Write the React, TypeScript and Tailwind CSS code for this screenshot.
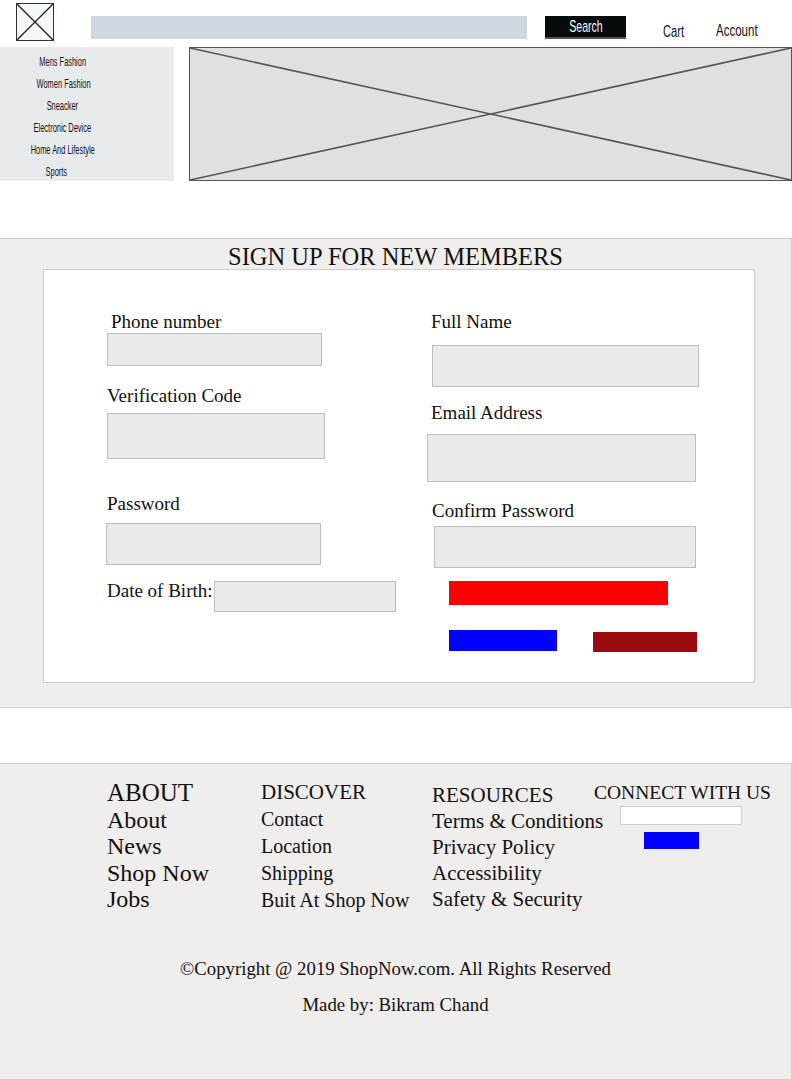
const serif = "font-['Liberation_Serif',serif] text-[#111]";
const sans = "font-['Liberation_Sans',Arial,sans-serif]";

const categories = [
  { label: "Mens Fashion", cls: "pl-[2px]" },
  { label: "Women Fashion", cls: "pl-[4px]" },
  { label: "Sneacker", cls: "" },
  { label: "Electronic Device", cls: "" },
  { label: "Home And Lifestyle", cls: "pl-[2px]" },
  { label: "Sports", cls: "pr-[12px]" },
];

const footerCols = [
  { title: "ABOUT", items: ["About", "News", "Shop Now", "Jobs"], w: "w-[154px]", size: "text-[24px] leading-[26.5px]" },
  { title: "DISCOVER", items: ["Contact", "Location", "Shipping", "Buit At Shop Now"], w: "w-[171px]", size: "text-[20px] leading-[27px]" },
  { title: "RESOURCES", items: ["Terms & Conditions", "Privacy Policy", "Accessibility", "Safety & Security"], w: "w-[162px]", size: "text-[21px] leading-[26px]" },
];

// crossed-out placeholder box
const Cross = ({ stroke = "#444", width = 1.5 }: { stroke?: string; width?: number }) => (
  <svg className="absolute inset-0 h-full w-full" viewBox="0 0 100 100" preserveAspectRatio="none">
    <line x1="0" y1="0" x2="100" y2="100" stroke={stroke} strokeWidth={width} vectorEffect="non-scaling-stroke" />
    <line x1="100" y1="0" x2="0" y2="100" stroke={stroke} strokeWidth={width} vectorEffect="non-scaling-stroke" />
  </svg>
);

const Field = ({ className }: { className: string }) => (
  <div className={`border border-[#bdbdbd] bg-[#eaeaea] ${className}`} />
);

const Label = ({ children, className = "" }: { children: React.ReactNode; className?: string }) => (
  <div className={`text-[19px] leading-5 ${className}`}>{children}</div>
);

export default function App() {
  return (
    <div className="min-h-[1080px] w-[792px] bg-white">
      {/* Top bar */}
      <div className={`flex h-[47px] items-start ${sans}`}>
        <div className="relative ml-4 mt-[3px] h-[38px] w-[38px] border border-[#333] bg-[#f4f8f9]">
          <Cross stroke="#222" width={1.3} />
        </div>
        <div className="ml-[37px] mt-4 h-[23px] w-[436px] bg-[#cdd9de]" />
        <button className="ml-[18px] mt-4 flex h-[23px] w-[81px] items-center justify-center border-b-2 border-[#555] bg-[#050a0c]">
          <span className="inline-block scale-x-[0.62] text-[17px] leading-5 text-white">Search</span>
        </button>
        <div className="ml-[37px] mt-[20px] w-[26px] overflow-visible">
          <span className="inline-block origin-left scale-x-[0.7] text-[16px] leading-5 text-[#111]">Cart</span>
        </div>
        <div className="ml-[27px] mt-[19px] w-[42px]">
          <span className="inline-block origin-left scale-x-[0.72] text-[16px] leading-5 text-[#111]">Account</span>
        </div>
      </div>

      {/* Categories + banner */}
      <div className="flex h-[134px]">
        <div className={`w-[174px] bg-[#e8ebee] pt-1 ${sans}`}>
          <ul className="w-[124px] text-center">
            {categories.map((c) => (
              <li key={c.label} className={`h-[22px] text-[12px] leading-[22px] text-[#111] ${c.cls}`}>
                <span className="inline-block scale-x-[0.62]">{c.label}</span>
              </li>
            ))}
          </ul>
        </div>
        <div className="relative ml-[15px] flex-1 border border-[#555] bg-[#e0e0e0]">
          <Cross stroke="#555" width={1.6} />
        </div>
      </div>

      {/* Sign up */}
      <section className={`mt-[57px] h-[470px] w-[792px] border border-l-0 border-[#cfcfcf] bg-[#f0eded] pt-[6px] ${serif}`}>
        <h2 className="h-6 text-center text-[24.5px] leading-6">SIGN UP FOR NEW MEMBERS</h2>
        <div className="ml-[43px] h-[414px] w-[712px] border border-[#cfcfcf] bg-white pl-[63px] pt-[42px]">
          <div className="flex">
            <div className="flex w-[320px] flex-col items-start">
              <Label className="ml-1">Phone number</Label>
              <Field className="mt-px h-[33px] w-[215px]" />
              <Label className="mt-5">Verification Code</Label>
              <Field className="mt-[7px] h-[46px] w-[218px]" />
              <Label className="mt-[35px]">Password</Label>
              <Field className="-ml-px mt-[9px] h-[42px] w-[215px]" />
              <div className="mt-[16px] flex items-start">
                <Label className="w-[107px]">Date of Birth:</Label>
                <Field className="h-[31px] w-[182px]" />
              </div>
            </div>
            <div className="flex flex-col items-start">
              <Label className="ml-1">Full Name</Label>
              <Field className="ml-[5px] mt-[13px] h-[42px] w-[267px]" />
              <Label className="ml-1 mt-4">Email Address</Label>
              <Field className="mt-[11px] h-[48px] w-[269px]" />
              <Label className="ml-[5px] mt-[19px]">Confirm Password</Label>
              <Field className="ml-[7px] mt-[5px] h-[42px] w-[262px]" />
              <div className="ml-[22px] mt-[13px] h-6 w-[219px] bg-[#ff0000]" />
              <div className="ml-[22px] mt-[25px] flex items-start gap-9">
                <div className="h-[21px] w-[108px] bg-[#0000ff]" />
                <div className="mt-[2px] h-[20px] w-[104px] bg-[#9b0a0e]" />
              </div>
            </div>
          </div>
        </div>
      </section>

      {/* Footer */}
      <footer className={`mt-[55px] h-[317px] w-[792px] border border-l-0 border-[#cfcfcf] bg-[#f0eded] pl-[107px] pt-[16px] ${serif}`}>
        <div className="flex items-start">
          {footerCols.map((col, i) => (
            <div key={col.title} className={`${col.w} ${col.size} ${i === 2 ? "mt-[2px]" : i === 1 ? "-mt-[1px]" : ""}`}>
              <div className={i === 0 ? "text-[25px]" : "text-[21px]"}>{col.title}</div>
              {col.items.map((it) => (
                <div key={it} className="whitespace-nowrap">{it}</div>
              ))}
            </div>
          ))}
          <div className="pt-[3px]">
            <div className="whitespace-nowrap text-[19.5px] leading-5">CONNECT WITH US</div>
            <div className="ml-[26px] mt-[3px] h-[19px] w-[122px] border border-[#cfcfcf] bg-white" />
            <div className="ml-[50px] mt-[7px] h-[17px] w-[55px] bg-[#0000ff]" />
          </div>
        </div>
        <div className="-ml-[107px] mt-[43px] text-center text-[18.8px] leading-6">
          ©Copyright @ 2019 ShopNow.com. All Rights Reserved
        </div>
        <div className="-ml-[107px] mt-3 text-center text-[18.8px] leading-6">Made by: Bikram Chand</div>
      </footer>
    </div>
  );
}
